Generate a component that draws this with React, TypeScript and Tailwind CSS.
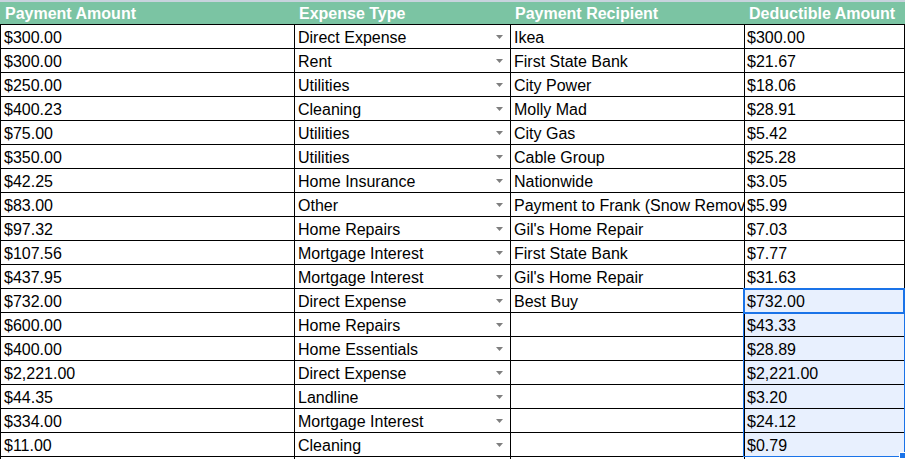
import React from "react";

const rows: [string, string, string, string][] = [
  ["$300.00", "Direct Expense", "Ikea", "$300.00"],
  ["$300.00", "Rent", "First State Bank", "$21.67"],
  ["$250.00", "Utilities", "City Power", "$18.06"],
  ["$400.23", "Cleaning", "Molly Mad", "$28.91"],
  ["$75.00", "Utilities", "City Gas", "$5.42"],
  ["$350.00", "Utilities", "Cable Group", "$25.28"],
  ["$42.25", "Home Insurance", "Nationwide", "$3.05"],
  ["$83.00", "Other", "Payment to Frank (Snow Removal)", "$5.99"],
  ["$97.32", "Home Repairs", "Gil's Home Repair", "$7.03"],
  ["$107.56", "Mortgage Interest", "First State Bank", "$7.77"],
  ["$437.95", "Mortgage Interest", "Gil's Home Repair", "$31.63"],
  ["$732.00", "Direct Expense", "Best Buy", "$732.00"],
  ["$600.00", "Home Repairs", "", "$43.33"],
  ["$400.00", "Home Essentials", "", "$28.89"],
  ["$2,221.00", "Direct Expense", "", "$2,221.00"],
  ["$44.35", "Landline", "", "$3.20"],
  ["$334.00", "Mortgage Interest", "", "$24.12"],
  ["$11.00", "Cleaning", "", "$0.79"],
  ["", "", "", ""],
];

function Arrow() {
  return (
    <svg width="7" height="4" viewBox="0 0 7 4" className="absolute right-[7px] top-[10px]">
      <path d="M0 0 L7 0 L3.5 4 Z" fill="#7f7f7f" />
    </svg>
  );
}

export default function App() {
  return (
    <div className="relative w-[905px] h-[459px] overflow-hidden bg-white font-['Liberation_Sans',Arial,sans-serif] text-[16px] text-black">
      <div className="h-[2px] bg-[#c8d3dd]" />
      <div className="grid grid-cols-[295px_216px_234px_160px] h-[23px] bg-[#7bc4a3] border-b border-black font-bold text-white leading-[24px]">
        <div className="pl-[5px] whitespace-nowrap overflow-hidden">Payment Amount</div>
        <div className="pl-[4px] whitespace-nowrap overflow-hidden">Expense Type</div>
        <div className="pl-[4px] whitespace-nowrap overflow-hidden">Payment Recipient</div>
        <div className="pl-[4px] whitespace-nowrap overflow-hidden">Deductible Amount</div>
      </div>
      {rows.map((r, i) => {
        const sel = i >= 11 && i <= 17;
        return (
          <div key={i} className="grid grid-cols-[295px_216px_234px_160px] h-[24px] leading-[25px]">
            <div className="border-l border-r border-b border-black pl-[3px] whitespace-nowrap overflow-hidden">{r[0]}</div>
            <div className="relative border-r border-b border-black pl-[3px] whitespace-nowrap overflow-hidden">
              {r[1]}
              {i < 18 && <Arrow />}
            </div>
            <div className="border-r border-b border-black pl-[3px] whitespace-nowrap overflow-hidden">{r[2]}</div>
            <div className={`border-r border-b border-black pl-[2px] whitespace-nowrap overflow-hidden ${sel ? "bg-[#e8f0fe]" : ""}`}>{r[3]}</div>
          </div>
        );
      })}
      <div className="absolute left-[743px] top-[288px] w-[162px] h-[169px] border border-[#1a73e8] pointer-events-none" />
      <div className="absolute left-[743px] top-[288px] w-[162px] h-[26px] border-2 border-[#1a73e8] pointer-events-none" />
      <div className="absolute left-[899px] top-[452px] w-[7px] h-[7px] bg-[#1a73e8] border border-white" />
    </div>
  );
}
